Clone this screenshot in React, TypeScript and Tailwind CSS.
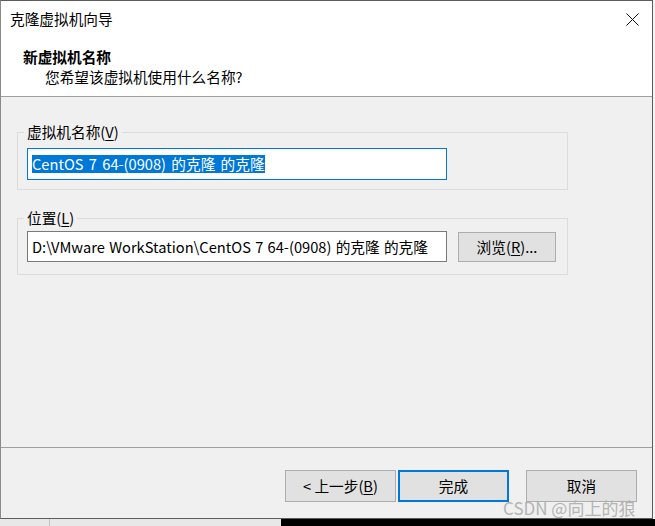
import React from "react";

const font = "font-['Noto_Sans_CJK_SC',sans-serif]";

function Mn({ c }: { c: string }) {
  return <span className="underline underline-offset-2">{c}</span>;
}

function Btn({
  children,
  primary,
  className = "",
}: {
  children: React.ReactNode;
  primary?: boolean;
  className?: string;
}) {
  return (
    <div
      className={
        "flex items-center justify-center bg-[#e1e1e1] text-[14.67px] text-black " +
        (primary ? "border-2 border-[#0078d7] " : "border border-[#adadad] ") +
        className
      }
    >
      {children}
    </div>
  );
}

export default function App() {
  return (
    <div className={`w-[655px] h-[526px] flex flex-col overflow-hidden bg-white ${font}`}>
      <div className="flex">
        {/* dialog window */}
        <div className="relative w-[653px] h-[519px] flex flex-col border border-[#5c5c5c] border-l-[#8a8a8a] bg-[#f0f0f0]">
          {/* title + header */}
          <div className="h-[95px] bg-white flex flex-col">
            <div className="h-[36px] flex items-center justify-between pl-[9px] pr-[13px]">
              <span className="text-[14.67px] text-black">克隆虚拟机向导</span>
              <svg width="13" height="13" viewBox="0 0 13 13">
                <path d="M0.5 0.5 L12.5 12.5 M12.5 0.5 L0.5 12.5" stroke="#111" strokeWidth="1" />
              </svg>
            </div>
            <div className="pt-[10px] text-[14.67px] leading-[20px] text-black">
              <div className="pl-[22px] font-bold">新虚拟机名称</div>
              <div className="pl-[44px]">您希望该虚拟机使用什么名称?</div>
            </div>
          </div>
          <div className="h-px bg-[#a0a0a0]" />

          {/* body */}
          <div className="flex-1 pl-[16px] pt-[25px]">
            <fieldset className="w-[551px] border border-[#dcdcdc] pt-[6px] pb-[9px]">
              <legend className="ml-[6px] px-[3px] text-[14.67px] leading-[20px] text-black">
                虚拟机名称(<Mn c="V" />)
              </legend>
              <div className="px-[9px]">
                <div className="w-[420px] h-[32px] border border-[#0078d7] bg-white flex items-center pl-[4px]">
                  <span className="bg-[#0078d7] text-white text-[14.67px] leading-[18px] whitespace-pre [word-spacing:2px]">
                    CentOS 7 64-(0908) 的克隆 的克隆
                  </span>
                </div>
              </div>
            </fieldset>

            <fieldset className="mt-[18px] w-[551px] border border-[#dcdcdc] pt-[3px] pb-[12px]">
              <legend className="ml-[6px] px-[3px] text-[14.67px] leading-[20px] text-black">
                位置(<Mn c="L" />)
              </legend>
              <div className="px-[9px] flex items-center gap-[11px]">
                <div className="w-[420px] h-[31px] border border-[#7a7a7a] bg-white flex items-center pl-[4px]">
                  <span className="text-black text-[14.67px] whitespace-pre [word-spacing:1px]">
                    D:\VMware WorkStation\CentOS 7 64-(0908) 的克隆 的克隆
                  </span>
                </div>
                <Btn className="w-[98px] h-[30px]">
                  浏览(<Mn c="R" />)...
                </Btn>
              </div>
            </fieldset>
          </div>

          {/* footer */}
          <div className="h-px bg-[#a0a0a0]" />
          <div className="h-[70px] flex justify-end items-start pt-[22px] pr-[15px]">
            <Btn className="w-[111px] h-[32px]">
              &lt; 上一步(<Mn c="B" />)
            </Btn>
            <Btn primary className="ml-[2px] w-[111px] h-[32px]">
              完成
            </Btn>
            <Btn className="ml-[17px] w-[111px] h-[32px]">取消</Btn>
          </div>

          <div className="absolute left-[502px] top-[497px] text-[17px] leading-[20px] text-[#b4b4b4] whitespace-nowrap">
            CSDN @向上的狼
          </div>
        </div>
        <div className="flex-1 bg-[#f4f4f4]" />
      </div>
      <div className="flex-1 flex">
        <div className="w-[281px] flex bg-[#e8e8e8]">
          <div className="w-[50px] border-r border-[#c2c2c2]" />
          <div className="flex-1" />
        </div>
        <div className="flex-1 bg-black" />
      </div>
    </div>
  );
}
